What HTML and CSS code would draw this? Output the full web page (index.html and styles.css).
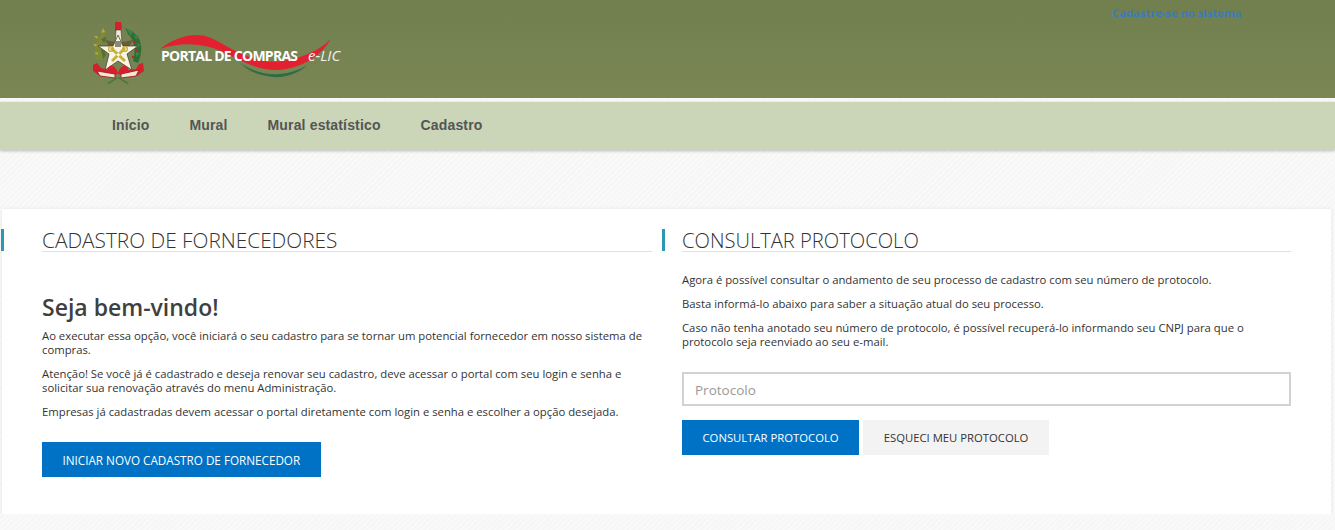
FILE: index.html
```html
<!DOCTYPE html>
<html lang="pt-BR">
<head>
    <meta charset="UTF-8">
    <title>Portal de Compras e-LIC</title>
    <link rel="stylesheet" href="styles.css">
</head>
<body>

    <header class="top-bar">
        <a class="logo" href="#">
            <!-- brasao -->
            <svg class="brasao" width="70" height="75" viewBox="0 0 70 75">
                <!-- ramos -->
                <path d="M8 45C5 35 7 24 17 15l2 2c-6 8-7 16-4 28z" fill="#7d8a36"/>
                <path d="M9 24l-3-3 4 0zM8 32l-3-3 4 0zM10 40l-4-2 4-1zM13 18l2-5 2 4z" fill="#b5a83c"/>
                <path d="M13 24l6-2-3 6zM14 34l5-2-3 6zM12 28l6 12-3 4z" fill="#54722f"/>
                <path d="M50 48c5-11 5-24-5-31l-8-4 3 6c7 7 8 17 5 27z" fill="#2f6d38"/>
                <path d="M38 14l7 2-2 5zM46 20l5 1-3 4zM49 28l4 2-4 3zM48 37l4 1-4 4z" fill="#3d8442"/>
                <circle cx="46" cy="27" r="1.3" fill="#c8202c"/>
                <circle cx="49" cy="36" r="1.3" fill="#c8202c"/>
                <circle cx="45" cy="42" r="1.2" fill="#c8202c"/>
                <!-- aguia e torre -->
                <path d="M17 25l10 2h8l10-2-5 8H22z" fill="#6d5a36"/>
                <path d="M27 7h6l1 6-2 3h-5z" fill="#d3202c"/>
                <path d="M28 15h5l1 13h-7z" fill="#efeadb" stroke="#4a3a20" stroke-width=".6"/>
                <!-- estrela -->
                <path d="M30 20L35 31H50L39 39 44 55 30 46 17 55 21 39 10 31H25z" fill="#f7f5ea" stroke="#4f4226" stroke-width=".8"/>
                <path d="M27 26h6v6h-6z" fill="#8b8878"/>
                <!-- chaves -->
                <path d="M22 34l14 13 2-2-14-13zM38 34L25 47l-2-2 13-13z" fill="#c7b135"/>
                <circle cx="23" cy="34" r="2.4" fill="none" stroke="#c7b135" stroke-width="1.4"/>
                <circle cx="37" cy="34" r="2.4" fill="none" stroke="#c7b135" stroke-width="1.4"/>
                <!-- fita -->
                <path d="M5 50l4-2 4 5 12 3v6L12 61l-7-5zM55 48l-4 1-3 5-12 2v6l13-1 7-5z" fill="#d3202c"/>
                <path d="M22 51c3-1 7 2 8 8l-8 2c-4-3-3-8 0-10zM38 51c-3-1-7 2-8 8l8 2c4-3 3-8 0-10z" fill="#d91f2b"/>
                <path d="M9 56l18 3v4L12 61zM51 55l-18 4v4l15-2z" fill="#efe8d2" stroke="#a01c24" stroke-width=".9"/>
                <path d="M19 68l10-6 1 1-9 6zM41 68l-10-6-1 1 9 6z" fill="#4a7a34"/>
            </svg>
            <span class="logo-nome">
                <svg class="logo-onda" width="195" height="55" viewBox="0 0 195 55">
                    <path d="M5 24C20 12 38 8 50 11 65 15 85 32 108 36 130 39 160 30 176 14 165 32 145 44 122 45 100 45 85 35 70 28 55 20 30 15 5 24Z" fill="#e2202f"/>
                    <path d="M85 38C97 46 110 50 125 49 135 48 145 45 152 40 145 48 130 53 118 52 105 51 93 46 85 38Z" fill="#2f6b45"/>
                </svg>
                <span class="logo-texto">PORTAL DE COMPRAS</span>
                <span class="logo-elic">e-LIC</span>
            </span>
        </a>
        <a class="link-cadastre" href="#">Cadastre-se no sistema</a>
    </header>

    <nav class="menu">
        <a href="#">Início</a>
        <a href="#">Mural</a>
        <a href="#">Mural estatístico</a>
        <a href="#">Cadastro</a>
    </nav>

    <main class="card">
        <section class="coluna-esq">
            <h2 class="titulo">CADASTRO DE FORNECEDORES</h2>
            <div class="conteudo">
                <h1>Seja bem-vindo!</h1>
                <p>Ao executar essa opção, você iniciará o seu cadastro para se tornar um potencial fornecedor em nosso sistema de compras.</p>
                <p>Atenção! Se você já é cadastrado e deseja renovar seu cadastro, deve acessar o portal com seu login e senha e solicitar sua renovação através do menu Administração.</p>
                <p>Empresas já cadastradas devem acessar o portal diretamente com login e senha e escolher a opção desejada.</p>
                <div class="botoes botoes-novo">
                    <button class="btn btn-azul btn-novo">INICIAR NOVO CADASTRO DE FORNECEDOR</button>
                </div>
            </div>
        </section>

        <section class="coluna-dir">
            <h2 class="titulo">CONSULTAR PROTOCOLO</h2>
            <div class="conteudo">
                <p>Agora é possível consultar o andamento de seu processo de cadastro com seu número de protocolo.</p>
                <p>Basta informá-lo abaixo para saber a situação atual do seu processo.</p>
                <p>Caso não tenha anotado seu número de protocolo, é possível recuperá-lo informando seu CNPJ para que o protocolo seja reenviado ao seu e-mail.</p>
                <input class="campo" type="text" placeholder="Protocolo">
                <div class="botoes">
                    <button class="btn btn-azul">CONSULTAR PROTOCOLO</button>
                    <button class="btn btn-cinza">ESQUECI MEU PROTOCOLO</button>
                </div>
            </div>
        </section>
    </main>

</body>
</html>
```

FILE: styles.css
```css
body {
    margin: 0;
    padding: 0;
    font-family: 'Open Sans', sans-serif;
    color: #333;
    background-color: #f8f8f8;
    background-image: repeating-linear-gradient(135deg, #f9f9f9 0, #f9f9f9 2px, #f6f6f6 2px, #f6f6f6 4px);
    overflow: hidden;
}

/* topo */
.top-bar {
    height: 98px;
    background: linear-gradient(to bottom, #717f4f, #7a8654);
    position: relative;
}

.logo {
    display: flex;
    align-items: flex-start;
    padding: 15px 0 0 88px;
    text-decoration: none;
}

.logo-nome {
    position: relative;
    display: block;
    width: 195px;
    height: 55px;
    margin: 10px 0 0 -3px;
}

.logo-onda {
    position: absolute;
    left: 0;
    top: 0;
}

.logo-texto {
    position: absolute;
    left: 6px;
    top: 21px;
    font-size: 14px;
    font-weight: 700;
    letter-spacing: -0.75px;
    color: #fff;
    white-space: nowrap;
}

.logo-elic {
    position: absolute;
    left: 153px;
    top: 20px;
    font-size: 15px;
    font-style: italic;
    color: #f1f1f1;
    white-space: nowrap;
}

.link-cadastre {
    position: absolute;
    left: 1112px;
    top: 5px;
    font-size: 11.2px;
    font-weight: 700;
    color: #3b7bbd;
    text-decoration: none;
}

/* menu */
.menu {
    margin-top: 4px;
    height: 46px;
    padding: 0 0 2px 92px;
    display: flex;
    align-items: center;
    background-color: #cbd5b7;
    box-shadow: 0 1px 3px rgba(0, 0, 0, 0.25);
}

.menu a {
    padding: 0 20px;
    font-family: 'Liberation Sans', Arial, sans-serif;
    font-size: 14px;
    font-weight: 700;
    letter-spacing: 0.15px;
    color: #555;
    text-decoration: none;
}

/* card */
.card {
    margin: 59px 4px 0 2px;
    height: 265px;
    padding: 20px 0;
    display: grid;
    grid-template-columns: 660px 669px;
    background-color: #fff;
    box-shadow: 0 0 4px rgba(0, 0, 0, 0.08);
}

.titulo {
    margin: 0;
    height: 22px;
    border-left: 3px solid #2f96b4;
    font-weight: 300;
    line-height: 22px;
    color: #333;
    position: relative;
}

.titulo::after {
    content: "";
    position: absolute;
    bottom: -1px;
    height: 1px;
    background-color: #e0e0e0;
}

.coluna-esq .titulo {
    margin-left: -1px;
    padding-left: 38px;
    font-size: 20.8px;
}

.coluna-esq .titulo::after {
    left: 38px;
    right: 10px;
}

.coluna-dir .titulo {
    padding-left: 17px;
    font-size: 20.15px;
}

.coluna-dir .titulo::after {
    left: 17px;
    right: 40px;
}

.coluna-esq .conteudo {
    padding: 41px 10px 0 40px;
}

.coluna-dir .conteudo {
    padding: 22px 40px 0 20px;
}

.conteudo h1 {
    margin: 0 0 7px;
    font-size: 23px;
    font-weight: 600;
    line-height: 30px;
    color: #404040;
}

.conteudo p {
    margin: 0 0 10px;
    font-size: 11.3px;
    line-height: 14px;
}

.campo {
    display: block;
    box-sizing: border-box;
    width: 100%;
    height: 34px;
    margin-top: 23px;
    padding: 1px 11px 0;
    border: 2px solid #d2d2d2;
    font-family: 'Open Sans', sans-serif;
    font-size: 13.5px;
    outline: none;
}

.campo::placeholder {
    color: #999;
}

.botoes {
    display: flex;
    gap: 4px;
    margin-top: 14px;
}

.botoes-novo {
    margin-top: 23px;
}

.btn {
    height: 35px;
    padding: 0 20.5px;
    border: none;
    font-family: 'Open Sans', sans-serif;
    font-size: 11.3px;
    cursor: pointer;
}

.btn-novo {
    font-size: 11.7px;
}

.btn-azul {
    background-color: #0072c6;
    color: #fff;
}

.btn-cinza {
    background-color: #f3f3f3;
    color: #333;
}
```
